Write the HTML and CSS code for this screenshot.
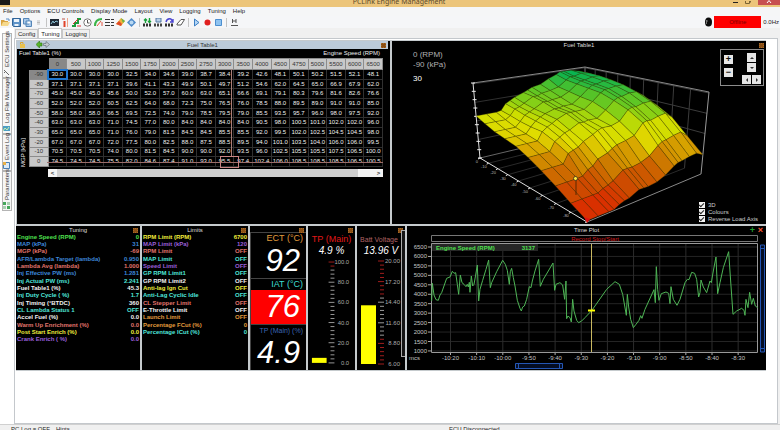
FILE: index.html
```
<!DOCTYPE html>
<html lang="en">
<head>
<meta charset="utf-8">
<title>PCLink Engine Management</title>
<link rel="stylesheet" href="styles.css">
</head>
<body>
<div class="app">
  <header class="titlebar">
    <span class="app-icon" aria-hidden="true"></span>
    <h1>PCLink Engine Management</h1>
    <div class="window-buttons">
      <button aria-label="Minimise"><svg width="5" height="6" viewBox="0 0 5 6"><path d="M0 1.5H5" stroke="#222" fill="none"/></svg></button>
      <button aria-label="Restore"><svg width="6" height="6" viewBox="0 0 6 6"><path d="M.5 0V2.5H4.500V0M5.500 0V1.500" stroke="#7a6434" fill="none"/></svg></button>
      <button class="close" aria-label="Close"><svg width="6" height="6" viewBox="0 0 6 6"><path d="M1 3L3 0.500L5 3" stroke="#fff" fill="none"/></svg></button>
    </div>
  </header>

  <nav class="menu">
    <button>File</button><button>Options</button><button>ECU Controls</button><button>Display Mode</button><button>Layout</button><button>View</button><button>Logging</button><button>Tuning</button><button>Help</button>
  </nav>

  <div class="toolbar">
    <div class="tools">
      <button aria-label="Open"><svg viewBox="0 0 9 9"><path d="M0 2H3L4 3H7V8H0Z" fill="#d9a441"/><path d="M2 4H9L7 8H0Z" fill="#f6d98c"/><path d="M5 1H8V3" stroke="#5a8fc4" fill="none"/></svg></button>
      <button aria-label="Save"><svg viewBox="0 0 9 9"><path d="M0.500 .5H8.500V8.500H1.500L.5 7.500Z" fill="#5d93c8" stroke="#2f6499"/><path d="M2 1H7V4H2ZM2.500 6H6.500V8H2.500Z" fill="#e9f2fa"/></svg></button>
      <button aria-label="Save all"><svg viewBox="0 0 9 9"><path d="M.5 .5H6V6H.5ZM3 3H8.500V8.500H3Z" fill="#a9c9e8" stroke="#5586b8"/><path d="M4.500 3.500H7V5.500H4.500Z" fill="#fff"/></svg></button>
      <button aria-label="Print"><svg viewBox="0 0 9 9"><path d="M3 2H6V7H3Z" fill="#d9dbdd"/><path d="M3 4.500H6" stroke="#bbb"/></svg></button>
      <i class="sep"></i>
      <button aria-label="Display"><svg viewBox="0 0 9 9"><path d="M0 1H9V8H0Z" fill="#1d2733"/><path d="M1 6L3 3L4 5L6 3L8 4" stroke="#8dc4d8" fill="none"/></svg></button>
      <button aria-label="Gauge"><svg viewBox="0 0 9 9"><path d="M3.500 3V9" stroke="#e0442a" stroke-width="2"/><path d="M6.500 0V9" stroke="#f0a488"/><path d="M1 1H4" stroke="#bb5544"/></svg></button>
      <button aria-label="Step plot"><svg viewBox="0 0 9 9"><path d="M0 8H3V5H6V1H9" stroke="#1d9b3c" stroke-width="2" fill="none"/><path d="M1 6L6 1M5 8H9" stroke="#d33" fill="none"/></svg></button>
      <button aria-label="Clock"><svg viewBox="0 0 9 9"><circle cx="4.500" cy="4.500" r="3.700" fill="#fff" stroke="#777"/><path d="M4.500 2V5H6.500" stroke="#555" fill="none"/></svg></button>
      <button aria-label="Dial"><svg viewBox="0 0 9 9"><path d="M1 8Q1 1 8 1" stroke="#3bb44a" stroke-width="2" fill="none"/><path d="M3 8L7 3M8 4V8" stroke="#e05540" fill="none"/></svg></button>
      <button aria-label="List"><svg viewBox="0 0 9 9"><path d="M0 1.500H5M6 1.500H9M0 4.500H5M6 4.500H9M0 7.500H5M6 7.500H9" stroke="#383838" fill="none"/></svg></button>
      <button aria-label="Surface"><svg viewBox="0 0 9 9"><path d="M0 6L5 0L9 3L5 8Z" fill="#f0b23b"/><path d="M0 6L3 3L6 6L5 8Z" fill="#e04a2a"/><path d="M5 0L9 3L7 5Z" fill="#6ab344"/></svg></button>
      <button aria-label="Help"><svg viewBox="0 0 9 9"><path d="M4.500 0L9 4.500L4.500 9L0 4.500Z" fill="#4f8bc9"/><circle cx="4.500" cy="4.500" r="2" fill="#b9d8f2"/></svg></button>
      <i class="sep"></i>
      <button aria-label="Transfer"><svg viewBox="0 0 9 9"><path d="M2.500 5V1M1 2.500L2.500 1L4 2.500M6.500 0V4M5 3L6.500 4.500L8 3" stroke="#18a038" fill="none" stroke-width="1.400"/><path d="M0 7H9" stroke="#333" stroke-width="3" stroke-dasharray="2 1"/></svg></button>
      <button aria-label="Store"><svg viewBox="0 0 9 9"><path d="M2 0H7V4H2Z" fill="#b8cfe6" stroke="#557ba6"/><path d="M0 7H9" stroke="#444" stroke-width="3" stroke-dasharray="2 1"/></svg></button>
      <button aria-label="Reload"><svg viewBox="0 0 9 9"><path d="M1 4Q2 0 6 1L8 4M8 1V4H5" stroke="#4a44d0" fill="none" stroke-width="1.400"/><path d="M0 7H9" stroke="#333" stroke-width="3" stroke-dasharray="2 1"/></svg></button>
      <button aria-label="Erase"><svg viewBox="0 0 9 9"><path d="M1 6L5 1.500H8.500L5 7H1Z" fill="#fff" stroke="#555"/></svg></button>
      <i class="sep"></i>
      <button aria-label="Play"><svg viewBox="0 0 9 9"><path d="M2.500 1L7 4.500L2.500 8Z" fill="#b5d6f5" stroke="#3b7fc4"/></svg></button>
      <button aria-label="Record"><svg viewBox="0 0 9 9"><circle cx="4.500" cy="4.500" r="3" fill="#e02020"/></svg></button>
      <button aria-label="Stop"><svg viewBox="0 0 9 9"><path d="M1.500 1.500H7.500V7.500H1.500Z" fill="#8fc3f0" stroke="#4c8fd0"/></svg></button>
      <i class="sep"></i>
      <button aria-label="Marker"><svg viewBox="0 0 9 9"><path d="M2.500 1V5M6 1V5M2.500 3H6M1 7.500H8" stroke="#555" fill="none"/></svg></button>
    </div>
    <div class="connection">
      <svg width="7" height="10" viewBox="0 0 7 10"><ellipse cx="3.500" cy="5" rx="3.500" ry="4.500" fill="#0c0c0c"/><path d="M1 4H2.500M1 6H2" stroke="#ddd"/></svg>
      <button class="offline">Offline</button>
      <span>0.0Hz</span>
    </div>
  </div>

  <div class="workspace">
    <aside class="side-tabs">
      <button class="side-tab t1"><svg viewBox="0 0 7 7"><path d="M1 1L6 6M4 5L6 3" stroke="#666" fill="none"/></svg>ECU Settings</button>
      <button class="side-tab t2"><svg viewBox="0 0 7 7"><path d="M0 1H7V6H0Z" fill="#4d9fc4"/><path d="M1 5L3 2L5 4L7 1" stroke="#c9f0b0" fill="none"/></svg>Log File Manager</button>
      <button class="side-tab t3"><svg viewBox="0 0 7 7"><path d="M.5 .5H6.500V6.500H.5Z" fill="#dceaf8" stroke="#4a7fb5"/><path d="M4 4H7V7H4Z" fill="#e8b04a"/></svg>Event Log</button>
      <button class="side-tab t4"><svg viewBox="0 0 7 7"><path d="M0 0H3V3H0ZM4 4H7V7H4Z" fill="#44a65a"/><path d="M4 0H7V3H4ZM0 4H3V7H0Z" fill="#a9cfb2"/></svg>Parameters</button>
    </aside>

    <main class="main">
      <div class="tabs"><button>Config</button><button class="active">Tuning</button><button>Logging</button></div>
      <div class="page">
        <div class="row top-row">
          <section class="panel fuel">
            <header class="fuel-title">
              <div class="fuel-tools">
                <svg width="7" height="7" viewBox="0 0 7 7"><path d="M1.500 3V1.500H4V3" stroke="#d8a734" fill="none"/><path d="M1 3H6V7H1Z" fill="#e9c24e"/></svg>
                <svg width="14" height="7" viewBox="0 0 14 7"><path d="M0 3.500L3.500 0V2H6V5H3.500V7Z" fill="#58b528" stroke="#2d7414" stroke-width=".6"/><path d="M13.500 3.500L10 .5V2.500H7.500V4.500H10V6.500Z" fill="#c5cbd0" stroke="#68737c" stroke-width=".7"/></svg>
              </div>
              <h2>Fuel Table1</h2>
              <i class="pin"></i>
            </header>
            <div class="fuel-labels"><span>Fuel Table1 (%)</span><span>Engine Speed (RPM)</span></div>
            <div class="fuel-body">
              <div class="axis-label">MGP [kPa]</div>
              <div class="table-wrap">
                <table id="fuel-table"></table>
                <i class="cross-v"></i><i class="cross-h"></i><i class="cross-box"></i>
              </div>
            </div>
            <div class="scroll"><button aria-label="Scroll left">&lt;</button><i></i><button aria-label="Scroll right">&gt;</button></div>
          </section>

          <section class="panel surface">
            <header class="panel-title"><h2>Fuel Table1</h2><i class="pin"></i></header>
            <svg id="surface" class="surface-plot" viewBox="392 49 374 174" role="img" aria-label="Fuel surface"></svg>
            <div class="readout"><span>0 (RPM)</span><span>-90 (kPa)</span><strong>30</strong></div>
            <div class="pad">
              <div class="zoom-buttons"><button>+</button><button>−</button></div>
              <div class="arrows"><button class="up" aria-label="Up"></button><button class="down" aria-label="Down"></button><button class="left" aria-label="Left"></button><button class="right" aria-label="Right"></button></div>
            </div>
            <div class="checks">
              <label><input type="checkbox" checked>3D</label>
              <label><input type="checkbox" checked>Colours</label>
              <label><input type="checkbox" checked>Reverse Load Axis</label>
            </div>
          </section>
        </div>

        <div class="row bottom-row">
          <section class="panel list">
            <header class="panel-title"><h2>Tuning</h2><i class="pin"></i></header>
            <dl>
              <div class="green"><dt>Engine Speed (RPM)</dt><dd>0</dd></div>
              <div class="blue"><dt>MAP (kPa)</dt><dd>31</dd></div>
              <div class="salmon"><dt>MGP (kPa)</dt><dd>-69</dd></div>
              <div class="blue"><dt>AFR/Lambda Target (lambda)</dt><dd>0.950</dd></div>
              <div class="salmon"><dt>Lambda Avg (lambda)</dt><dd>1.000</dd></div>
              <div class="blue"><dt>Inj Effective PW (ms)</dt><dd>1.281</dd></div>
              <div class="cyan"><dt>Inj Actual PW (ms)</dt><dd>2.241</dd></div>
              <div class="white"><dt>Fuel Table1 (%)</dt><dd>45.3</dd></div>
              <div class="cyan"><dt>Inj Duty Cycle ( %)</dt><dd>1.7</dd></div>
              <div class="white"><dt>Inj Timing (°BTDC)</dt><dd>360</dd></div>
              <div class="cyan"><dt>CL Lambda Status 1</dt><dd>OFF</dd></div>
              <div class="white"><dt>Accel Fuel (%)</dt><dd>0.0</dd></div>
              <div class="salmon"><dt>Warm Up Enrichment (%)</dt><dd>0.0</dd></div>
              <div class="yellow"><dt>Post Start Enrich (%)</dt><dd>0.0</dd></div>
              <div class="purple"><dt>Crank Enrich ( %)</dt><dd>0.0</dd></div>
            </dl>
          </section>

          <section class="panel list">
            <header class="panel-title"><h2>Limits</h2><i class="pin"></i></header>
            <dl>
              <div class="yellow"><dt>RPM Limit (RPM)</dt><dd>6700</dd></div>
              <div class="purple"><dt>MAP Limit (kPa)</dt><dd>120</dd></div>
              <div class="salmon"><dt>RPM Limit</dt><dd>OFF</dd></div>
              <div class="cyan"><dt>MAP Limit</dt><dd>OFF</dd></div>
              <div class="purple"><dt>Speed Limit</dt><dd>OFF</dd></div>
              <div class="cyan"><dt>GP RPM Limit1</dt><dd>OFF</dd></div>
              <div class="white"><dt>GP RPM Limit2</dt><dd>OFF</dd></div>
              <div class="yellow"><dt>Anti-lag Ign Cut</dt><dd>OFF</dd></div>
              <div class="cyan"><dt>Anti-Lag Cyclic Idle</dt><dd>OFF</dd></div>
              <div class="salmon"><dt>CL Stepper Limit</dt><dd>OFF</dd></div>
              <div class="white"><dt>E-Throttle Limit</dt><dd>OFF</dd></div>
              <div class="orange"><dt>Launch Limit</dt><dd>OFF</dd></div>
              <div class="orange"><dt>Percentage FCut (%)</dt><dd>0</dd></div>
              <div class="cyan"><dt>Percentage ICut (%)</dt><dd>0</dd></div>
            </dl>
          </section>

          <section class="panel digits">
            <header class="panel-title"><i class="pin"></i></header>
            <div class="digit"><span class="orange">ECT (°C)</span><b>92</b></div>
            <div class="digit alarm"><span class="aqua">IAT (°C)</span><b>76</b></div>
            <div class="digit"><span class="navy">TP (Main) (%)</span><b>4.9</b></div>
          </section>

          <section class="panel gauge">
            <header class="panel-title"><i class="pin"></i></header>
            <h3 class="red">TP (Main)</h3>
            <output>4.9 %</output>
            <svg class="gauge-scale" id="gauge-tp" viewBox="0 0 48 110"></svg>
          </section>

          <section class="panel gauge batt">
            <header class="panel-title"><i class="pin"></i></header>
            <h3 class="rose">Batt Voltage</h3>
            <output>13.96 V</output>
            <svg class="gauge-scale" id="gauge-batt" viewBox="0 0 48 110"></svg>
            <i class="splitter"></i>
          </section>

          <section class="panel plot">
            <header class="panel-title"><h2>Time Plot</h2><b class="plus">+</b><b class="cross">×</b></header>
            <svg id="time-plot" viewBox="407 235 359 135" role="img" aria-label="Engine speed over time">
              <path d="M431.500 236.500H757.500V242.500H431.500Z" fill="none" stroke="#777"/>
              <text x="595" y="242" class="record">Record Stop/Start</text>
              <g id="plot-grid"></g>
              <path d="M432 245H538V252H432Z" fill="#262626"/>
              <text x="436" y="251" class="trace-name">Engine Speed (RPM)</text>
              <text x="535" y="251" class="trace-name end">3137</text>
              <g class="trace">
                <polyline transform="translate(400 222) scale(.3333)" points="95,240 97,187 102,222 108,236 115,238 120,222 125,215 132,195 140,172 150,168 157,151 162,157 167,155 172,190 176,220 181,162 186,185 192,190 198,197 202,190 205,198 208,184 210,214 214,165 218,195 222,190 226,168 232,132 236,240 240,205 248,178 258,145 266,117 271,200 275,185 290,152 308,118 316,130 322,148 328,190 331,152 335,142 340,170 345,195 352,238 360,262 364,270 368,258 373,255 380,235 388,197 393,200 397,180 405,150 416,115 421,196 430,175 445,150 459,126 464,208 468,190 480,185 488,192 494,235 498,180 500,293 504,285 510,290 514,303 518,235 522,270 530,298 536,305 545,300 555,290 575,269"/>
                <polyline transform="translate(590 222) scale(.3333)" points="5,269 50,205 75,182 88,190 98,220 109,283 112,220 116,258 122,295 130,320 138,310 147,298 152,284 156,292 165,265 192,206 196,245 199,137 203,205 207,238 214,218 228,213 236,217 240,248 243,197 250,235 261,253 270,235 285,185 292,175 297,176 305,154 314,157 320,175 326,228 330,215 333,177 340,198 350,215 360,180 364,185 370,150 378,108 383,218 390,185 400,140 416,92 422,180 429,280 440,270 455,262 462,268 465,283 468,235 474,260 479,214 485,250 490,232 496,255 503,260"/>
              </g>
              <path d="M591.500 245V353" stroke="#c9b860"/>
              <path d="M588 311.500H595" stroke="#ff0" stroke-width="2"/>
              <path d="M760.500 246V353H764.500V246ZM760 249.500H765M760 349.500H765" fill="#040d24" stroke="#2456b4"/>
              <path d="M515.500 364.500H562.500V369.500H515.500ZM518.500 364V370M559.500 364V370" fill="#040d24" stroke="#2456b4"/>
              <text x="409" y="361" class="tick-label start">mcs</text>
            </svg>
          </section>
        </div>
      </div>
    </main>
  </div>

  <footer class="status"><span>PC Log = OFF</span><span>Hints</span><span>ECU Disconnected</span></footer>
</div>
<script src="app.js"></script>
</body>
</html>
```
FILE: styles.css
```
* { box-sizing: border-box; }
body {
  margin: 0;
  background: #fff;
  color: #222;
  font: 6px/8px "Liberation Sans", Arial, sans-serif;
}
button { margin: 0; padding: 0; border: 0; background: none; color: inherit; font: inherit; }
h1, h2, h3, dl, dd { margin: 0; font-weight: inherit; font-size: inherit; }
svg { display: block; }
.app { height: 100vh; display: flex; flex-direction: column; overflow: hidden; }

.titlebar { display: flex; justify-content: space-between; height: 7px; background: #ecc57a; overflow: hidden; }
.titlebar h1 { font: 7px/4px "Noto Sans", sans-serif; color: #5a4a2a; }
.app-icon { width: 10px; height: 5px; background: #1a1a1a; margin-right: 55px; }
.window-buttons { display: flex; gap: 7px; }
.window-buttons .close { width: 22px; height: 5px; background: #c75050; display: flex; justify-content: center; }

.menu { display: flex; gap: 7px; padding: 0 3px; height: 9px; line-height: 9px; background: #f5f6f7; }
.toolbar { display: flex; justify-content: space-between; align-items: center; height: 12px; background: #f5f6f8; }
.tools { display: flex; align-items: center; gap: 2px; padding-left: 1px; }
.tools button { width: 9px; height: 9px; }
.tools svg { width: 9px; height: 9px; }
.sep { width: 1px; height: 9px; background: #c4c4c4; margin: 0 1px; }
.connection { display: flex; align-items: center; gap: 2px; padding-right: 1px; }
.offline { width: 47px; height: 12px; background: #f00; color: #7a0000; }

.workspace { flex: 1; display: flex; min-height: 0; background: #f0f0f0; }
.side-tabs { width: 14px; padding: 5px 2px 0; background: #fff; display: flex; flex-direction: column; flex: none; }
.side-tab {
  display: flex; align-items: center; gap: 2px; width: 10px; padding: 1px 0;
  writing-mode: vertical-rl; transform: rotate(180deg);
  border: 1px solid #b4b4b4; background: #f6f6f6; white-space: nowrap; color: #333;
}
.side-tab svg { width: 7px; height: 7px; flex: none; }
.t1 { height: 45px; }
.t2 { height: 56px; }
.t3 { height: 37px; }
.t4 { height: 40px; }
.main { flex: 1; min-width: 0; display: flex; flex-direction: column; }
.tabs { display: flex; align-items: flex-end; height: 10px; padding-left: 1px; background: #f0f0f0; }
.tabs button { height: 9px; padding: 0 2px; border: 1px solid #c8c8c8; border-bottom: 0; line-height: 8px; }
.tabs .active { height: 10px; background: #fff; }
.page { flex: 1; border: 1px solid #c4c8cc; background: #fff; padding: 1px 11px 0 1px; margin-right: 2px; }

.row { display: grid; gap: 2px; background: #c5cacd; padding-left: 1px; }
.top-row { grid-template-columns: 373fr 374fr; height: 184px; padding-top: 1px; }
.bottom-row { grid-template-columns: 124fr 106fr 56fr 47fr 48fr 359fr; height: 147px; padding: 2px 0 1px; }
.panel { position: relative; background: #000; color: #ddd; min-width: 0; overflow: hidden; }
.panel-title { display: flex; justify-content: center; align-items: center; height: 8px; position: relative; }
.pin { width: 5px; height: 5px; background: #8a4f14; border: 1px dotted #a86a28; position: absolute; right: 2px; top: 2px; }

.fuel-title { position: relative; display: flex; justify-content: center; height: 8px; background: #bccbd9; color: #333; margin-right: 2px; }
.fuel-tools { position: absolute; left: 2px; top: 0; display: flex; gap: 10px; }
.fuel-labels { display: flex; justify-content: space-between; padding: 0 10px 0 2px; height: 9px; line-height: 9px; color: #eee; }
.fuel-body { display: flex; margin-right: 7px; }
.axis-label { width: 12px; padding: 0 2px 4px; writing-mode: vertical-rl; transform: rotate(180deg); flex: none; color: #eee; line-height: 8px; }
.table-wrap { flex: 1; position: relative; min-width: 0; }
table { width: 100%; height: 109px; table-layout: fixed; border-collapse: collapse; }
thead tr { height: 11px; }
th, td { padding: 0; border: 1px solid #303030; line-height: 7px; text-align: center; }
td { color: #f0f0f0; }
th { background: #c8c8c8; color: #333; font-weight: normal; border-color: #8c8c8c; }
th.current { background: #888; }
td.selected { outline: 2px solid #2277cf; outline-offset: -1px; }
.corner { background: #000; border-color: #000; }
.cross-v, .cross-h, .cross-box { position: absolute; pointer-events: none; }
.cross-v { left: 57%; top: 11px; bottom: 10px; border-left: 1px solid #a87f7a; }
.cross-h { left: 5%; right: 0; bottom: 4px; border-top: 1px solid #9a6b68; }
.cross-box { left: 54%; width: 19px; bottom: -1px; height: 12px; border: 1px solid #c98484; }
.scroll { display: flex; margin: 2px 7px 0 31px; height: 8px; background: #f3f3f3; color: #333; line-height: 8px; }
.scroll button { width: 9px; font-weight: bold; }
.scroll i { flex: 1; background: #cfcfcf; margin-right: 16px; }

.surface-plot { width: 100%; height: 174px; }
.readout { position: absolute; left: 21px; top: 9px; display: flex; flex-direction: column; font-size: 8px; line-height: 10px; color: #b0b0b0; }
.readout strong { margin-top: 4px; color: #fff; font-weight: normal; }
.pad { position: absolute; right: 2px; top: 8px; width: 44px; height: 37px; border: 1px solid #8c8c8c; display: flex; justify-content: space-between; padding: 3px 2px 3px 3px; }
.pad button { background: #e6e6e6; color: #111; width: 9px; height: 9px; display: flex; align-items: center; justify-content: center; }
.zoom-buttons { display: flex; flex-direction: column; gap: 4px; padding-top: 2px; font-size: 9px; line-height: 9px; font-weight: bold; }
.arrows { display: grid; grid-template-columns: 9px 9px; gap: 1px; justify-items: center; align-content: start; }
.arrows .up, .arrows .down { grid-column: 1 / 3; }
.arrows .left, .arrows .right { margin-top: 2px; }
.arrows button::before { content: ""; border: 2px solid transparent; border-bottom-color: #333; border-top-width: 0; }
.arrows .down::before { transform: rotate(180deg); }
.arrows .left::before { transform: rotate(-90deg); }
.arrows .right::before { transform: rotate(90deg); }
.checks { position: absolute; right: 8px; bottom: 2px; display: flex; flex-direction: column; color: #ccc; }
.checks label { display: flex; align-items: center; gap: 3px; height: 7px; }
.checks input { appearance: none; margin: 0; width: 6px; height: 6px; background: #f2f2f2; display: grid; place-items: center; }
.checks input:checked::before { content: ""; width: 2px; height: 4px; border: solid #222; border-width: 0 1px 1px 0; transform: rotate(45deg); }

.list dl { padding: 0 1px; font-weight: bold; }
.list dl div { display: flex; justify-content: space-between; height: 7px; line-height: 7px; white-space: nowrap; }
.list dl div:nth-child(3n) { height: 8px; }
.green { color: #4fe04f; }
.blue { color: #3d86d8; }
.salmon { color: #e0746c; }
.cyan { color: #4fe6da; }
.white { color: #f2f2f2; }
.yellow { color: #f0ee3c; }
.purple { color: #9a5fd8; }
.orange { color: #e09a3c; }
.aqua { color: #3cdcd0; }
.navy { color: #3c66b4; }
.red { color: #e01818; }
.rose { color: #b06464; }

.digits { display: flex; flex-direction: column; }
.digit { flex: 1; display: flex; flex-direction: column; text-align: right; border-top: 1px solid #444; border-left: 1px solid #444; }
.digit span { font-size: 9px; line-height: 11px; padding-right: 3px; white-space: nowrap; }
.digit .navy { font-size: 7px; }
.digit b { flex: 1; font-size: 31px; line-height: 34px; font-style: italic; font-weight: normal; color: #fff; padding-right: 6px; }
.alarm b { background: #f00; }

.gauge { text-align: center; white-space: nowrap; }
.gauge h3 { font-size: 9px; line-height: 11px; }
.gauge .rose { font-size: 7px; padding-right: 4px; }
.gauge output { display: block; font-size: 10px; line-height: 11px; font-style: italic; color: #fff; }
.gauge-scale { width: 100%; height: 110px; }
.gauge-scale text { fill: #aaa; text-anchor: end; }
.splitter { position: absolute; right: 0; top: 4px; bottom: 13px; width: 4px; border: 1px solid #aaa; border-right: 0; background: #151515; }

.plot svg { width: 100%; height: 135px; }
.plus, .cross { position: absolute; right: 11px; top: 0; color: #1f9a2c; font-size: 9px; }
.cross { right: 3px; color: #ff5a32; }
.record { fill: #d01c1c; text-anchor: middle; }
.trace-name { fill: #4fe04f; font-weight: bold; }
.end { text-anchor: end; }
.trace polyline { fill: none; stroke: #4fb556; stroke-width: 1; vector-effect: non-scaling-stroke; }
.tick-label { fill: #c4c4c4; text-anchor: middle; font-size: 6px; }
.tick-label.end { text-anchor: end; }
.tick-label.start { text-anchor: start; }
.axis-num { fill: #bbb; font-size: 4px; text-anchor: end; }

.status { height: 6px; border-top: 1px solid #d0d0d0; background: #f0f0f0; display: grid; grid-template-columns: 45fr 393fr 331fr; padding-left: 11px; overflow: hidden; line-height: 9px; }
```
FILE: app.js
```
const rpm = [0, 500, 1000, 1250, 1500, 1750, 2000, 2500, 2750, 3000, 3500, 4000, 4500, 4750, 5000, 5500, 6000, 6500];
const load = [-90, -80, -70, -60, -50, -40, -30, -20, -10, 0];
const fuel = `30.0 30.0 30.0 30.0 32.5 34.0 34.6 39.0 38.7 38.4 39.2 42.6 48.1 50.1 50.2 51.5 52.1 48.1
37.1 37.1 37.1 37.1 39.6 41.1 43.3 49.9 50.1 49.7 51.2 54.6 62.0 64.5 65.0 66.9 67.9 62.0
45.0 45.0 45.0 45.6 50.0 52.0 57.0 60.0 63.0 65.1 66.6 69.1 79.1 80.3 79.6 81.6 82.6 76.6
52.0 52.0 52.0 60.5 62.5 64.0 68.0 72.3 75.0 76.5 76.0 78.5 88.0 89.5 89.0 91.0 91.0 85.0
58.0 58.0 58.0 66.5 69.5 72.5 74.0 79.0 78.5 79.5 79.0 85.5 93.5 95.7 96.0 98.0 97.5 92.0
63.0 63.0 63.0 71.0 74.5 77.0 80.0 84.0 84.0 84.0 84.0 90.5 98.0 100.5 101.0 102.0 102.0 96.0
65.0 65.0 65.0 71.0 76.0 79.0 81.5 84.5 84.5 85.5 85.5 92.0 99.5 102.0 102.5 104.5 104.5 98.0
67.0 67.0 67.0 72.0 77.5 80.0 82.5 88.0 87.5 88.5 89.5 94.0 101.0 103.5 104.0 106.0 106.0 99.5
70.5 70.5 70.5 74.0 80.0 81.5 84.5 90.0 90.0 92.0 93.5 96.0 102.5 105.5 105.5 107.5 106.5 100.0
74.5 74.5 74.5 75.5 82.0 84.6 87.4 91.0 93.0 95.5 97.4 102.4 106.0 108.5 108.5 108.5 106.5 100.5`
  .split("\n").map(r => r.split(" "));

// Fuel table
const head = rpm.map((r, i) => `<th scope="col"${i ? "" : ' class="current"'}>${r}</th>`).join("");
const rows = fuel.map((r, j) =>
  `<tr><th scope="row"${j ? "" : ' class="current"'}>${load[j]}</th>` +
  r.map((v, i) => `<td${i + j ? "" : ' class="selected"'}>${v}</td>`).join("") + "</tr>").join("");
document.getElementById("fuel-table").innerHTML =
  `<thead><tr><td class="corner"></td>${head}</tr></thead><tbody>${rows}</tbody>`;

// Perspective map of the unit square onto a quad: (0,0) (1,0) (1,1) (0,1)
function quadMap([p0, p1, p2, p3]) {
  const dx1 = p1[0] - p2[0], dx2 = p3[0] - p2[0], sx = p0[0] - p1[0] + p2[0] - p3[0];
  const dy1 = p1[1] - p2[1], dy2 = p3[1] - p2[1], sy = p0[1] - p1[1] + p2[1] - p3[1];
  const det = dx1 * dy2 - dx2 * dy1;
  const g = (sx * dy2 - dx2 * sy) / det, h = (dx1 * sy - sx * dy1) / det;
  return (u, v) => {
    const w = g * u + h * v + 1;
    return [((p1[0] - p0[0] + g * p1[0]) * u + (p3[0] - p0[0] + h * p3[0]) * v + p0[0]) / w,
            ((p1[1] - p0[1] + g * p1[1]) * u + (p3[1] - p0[1] + h * p3[1]) * v + p0[1]) / w];
  };
}
const floor = quadMap([[587, 222], [701, 174], [585, 133], [480, 158]]);
const roof = quadMap([[589, 128], [709, 92], [585, 67], [473, 83]]);
const project = (u, v, z) => {
  const t = (z - 29) / 81, a = floor(u, v), b = roof(u, v);
  return [a[0] + (b[0] - a[0]) * t, a[1] + (b[1] - a[1]) * t];
};
const at = (...p) => project(...p).map(n => n.toFixed(1)).join(",");
const line = (a, b, c) => `<path d="M${at(...a)}L${at(...b)}" stroke="${c}" fill="none"/>`;

const stops = [[30, 222, 36, 0], [42, 205, 76, 0], [53, 205, 125, 0], [60, 216, 165, 0], [67, 224, 220, 0], [76, 205, 222, 0], [86, 134, 208, 22], [96, 80, 194, 42], [103, 36, 184, 66], [109, 0, 178, 84]];
function colour(v) {
  let i = 0;
  while (i < stops.length - 2 && v > stops[i + 1][0]) i++;
  const a = stops[i], b = stops[i + 1], t = Math.max(0, Math.min(1, (v - a[0]) / (b[0] - a[0])));
  return `rgb(${[1, 2, 3].map(k => Math.round(a[k] + (b[k] - a[k]) * t)).join()})`;
}

let s = "";
for (let k = 1; k < 9; k++) {
  s += line([1, k / 9, 29], [1, k / 9, 110], "#3c3c3c") + line([0, k / 9, 29], [1, k / 9, 29], "#2a2a2a");
}
for (let z = 49; z < 110; z += 20) s += line([1, 0, z], [1, 1, z], "#3c3c3c") + line([0, 1, z], [1, 1, z], "#303030");
s += line([0, 1, 110], [1, 1, 110], "#888") + line([1, 1, 110], [1, 0, 110], "#888") + line([1, 1, 29], [1, 1, 110], "#777")
  + line([1, 0, 29], [1, 0, 110], "#999") + line([0, 0, 29], [1, 0, 29], "#888") + line([0, 1, 29], [1, 1, 29], "#666")
  + line([0, 1, 29], [0, 1, 110], "#ddd") + line([0, 0, 29], [0, 1, 29], "#ddd");
for (let k = 0; k <= 9; k++) {
  const [x, y] = project(0, k / 9, 29), [zx, zy] = project(0, 1, 29 + k * 9);
  s += `<path d="M${x - 2} ${y + 1}l2 -1M${zx - 2} ${zy}h4" stroke="#eee"/>`;
  if (k) s += `<text class="axis-num" x="${x - 2}" y="${y + 5}">${load[k]}</text>`;
}
for (let j = 8; j >= 0; j--) for (let i = 16; i >= 0; i--) {
  const c = [[i, j], [i + 1, j], [i + 1, j + 1], [i, j + 1]];
  const mean = c.reduce((t, [a, b]) => t + +fuel[b][a], 0) / 4;
  const pts = c.map(([a, b]) => at(rpm[a] / 6500, b / 9, +fuel[b][a])).join(" ");
  s += `<polygon points="${pts}" fill="${colour(mean)}" stroke="#3a3a00" stroke-opacity=".6" stroke-width=".5"/>`;
}
s += '<path d="M576 180V195" stroke="#5a2a00"/><circle cx="575.500" cy="178.500" r="2" fill="#ffe93c" stroke="#222" stroke-width=".7"/><path d="M584 217L590 219L587 223Z" fill="#e01010"/>';
document.getElementById("surface").innerHTML = s;

// Bar gauges: scale spans y 5..108
function gauge(id, labels, level, bar, red) {
  let g = "";
  for (let k = 0; k <= 25; k++) {
    const y = 5 + k * 4.12, big = k % 5 === 0;
    g += `<path d="M${big ? bar.t : bar.t + 2} ${y}H${bar.t + 6}" stroke="${red(k) ? "#a01c1c" : "#999"}"/>`;
  }
  labels.forEach((t, k) => g += `<text x="${bar.l}" y="${7 + k * 20.6}">${t}</text>`);
  g += `<path d="M${bar.x} ${108 - level * 103}h15V108h-15Z" fill="#ff0"/>`;
  document.getElementById(id).innerHTML = g;
}
gauge("gauge-tp", ["100.0", "80.0", "60.0", "40.0", "20.0", "0.0"], 0.05, { x: 4, t: 21, l: 42 }, k => k < 2);
gauge("gauge-batt", ["20.00", "17.20", "14.40", "11.60", "8.80", "6.00"], 0.57, { x: 4, t: 21, l: 43 }, k => k < 9 || k > 18);

// Time plot grid and axes
let p = "";
for (let k = 0; k <= 11; k++) {
  const y = 248 + k * 9.45;
  p += `<path d="M431 ${y}H758" stroke="#242424"/><path d="M428 ${y}H431" stroke="#aaa"/><text class="tick-label end" x="427" y="${y + 2}">${6500 - k * 500}</text>`;
}
["-10:20", "-10:10", "-10:00", "-9:50", "-9:40", "-9:30", "-9:20", "-9:10", "-9:00", "-8:50", "-8:40", "-8:30"].forEach((t, k) => {
  const x = 450.5 + k * 26.15;
  p += `<path d="M${x} 245V353" stroke="#2c2c2c"/><path d="M${x} 353V356" stroke="#aaa"/><text class="tick-label" x="${x}" y="361">${t}</text>`;
});
p += '<path d="M431.500 244.500H757.500V353.500H431.500Z" fill="none" stroke="#999"/>';
document.getElementById("plot-grid").innerHTML = p;
```
